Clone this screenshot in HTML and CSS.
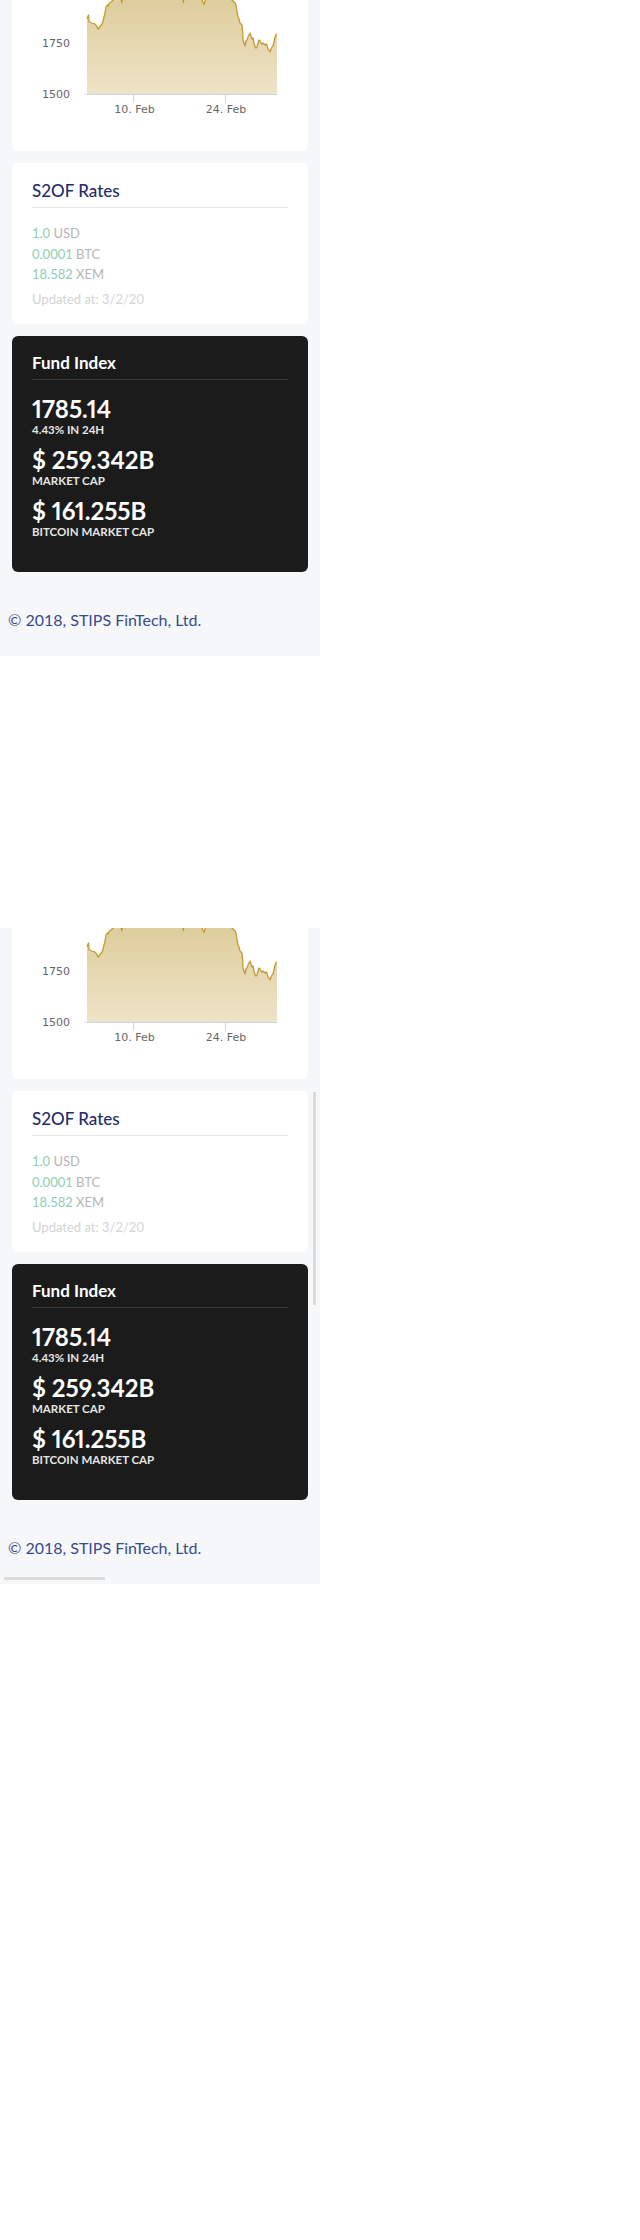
FILE: index.html
```html
<!DOCTYPE html>
<html lang="en">
<head>
<meta charset="utf-8">
<title>S2OF</title>
<link rel="stylesheet" href="styles.css">
</head>
<body>
<div class="page">
  <div class="viewport">
    <div class="panel">
      <div class="card chart-card">
        <svg class="chart" width="296" height="151" viewBox="12 0 296 151">
          <defs>
            <linearGradient id="fillA" x1="0" y1="0" x2="0" y2="1">
              <stop offset="0" stop-color="#dccb98"/>
              <stop offset="1" stop-color="#eee3c7"/>
            </linearGradient>
          </defs>
          <path class="area" fill="url(#fillA)" d="M87,19 L88.5,15 L89.2,22 L92,23 L95,24 L96.7,26 L98.3,29.5 L99.3,27 L101.7,25 L103.3,20 L105,13 L106,7 L107.3,5 L108.3,6 L109.3,3 L111,2 L113,0 L115,-2 L118,-5 L121,-2 L121.7,2.7 L122.5,-2 L130,-7 L150,-9 L170,-7 L180,-3 L182.8,-1 L183.3,2.5 L183.8,-1 L190,-5 L200,-3 L202,0 L203,2 L204,4.5 L205,1 L206,-2 L215,-6 L225,-3 L230,-1 L232,0 L234,2 L235,3 L236,5 L237,12 L238,17 L239,19 L240,23 L241,24 L242,25 L242.7,32 L243,40 L244,43 L245,46 L246,41 L247,40 L248,37 L249,35 L250,33 L251,36 L252,39 L253,38 L254,43 L255,47 L256,48 L257,47 L258,43 L259,40 L260,41 L261,43 L262,44 L263,43 L264,44 L265,45 L266,44 L267,45 L268,49 L269,50 L270,52 L271,49 L272,47 L273,46 L274,42 L275,37 L276,35 L277,34 L277,94 L87,94 Z"/>
          <path class="line" d="M87,19 L88.5,15 L89.2,22 L92,23 L95,24 L96.7,26 L98.3,29.5 L99.3,27 L101.7,25 L103.3,20 L105,13 L106,7 L107.3,5 L108.3,6 L109.3,3 L111,2 L113,0 L115,-2 L118,-5 L121,-2 L121.7,2.7 L122.5,-2 L130,-7 L150,-9 L170,-7 L180,-3 L182.8,-1 L183.3,2.5 L183.8,-1 L190,-5 L200,-3 L202,0 L203,2 L204,4.5 L205,1 L206,-2 L215,-6 L225,-3 L230,-1 L232,0 L234,2 L235,3 L236,5 L237,12 L238,17 L239,19 L240,23 L241,24 L242,25 L242.7,32 L243,40 L244,43 L245,46 L246,41 L247,40 L248,37 L249,35 L250,33 L251,36 L252,39 L253,38 L254,43 L255,47 L256,48 L257,47 L258,43 L259,40 L260,41 L261,43 L262,44 L263,43 L264,44 L265,45 L266,44 L267,45 L268,49 L269,50 L270,52 L271,49 L272,47 L273,46 L274,42 L275,37 L276,35 L277,34"/>
          <path class="axis" d="M85.5,94.5 L277.5,94.5 M133.5,94.5 L133.5,103 M225.5,94.5 L225.5,103"/>
          <text class="ylabel" x="70" y="47">1750</text>
          <text class="ylabel" x="70" y="97.5">1500</text>
          <text class="xlabel" x="134.5" y="113">10. Feb</text>
          <text class="xlabel" x="226" y="113">24. Feb</text>
        </svg>
      </div>
      <div class="card rates-card">
        <h2 class="card-title">S2OF Rates</h2>
        <div class="rates">
          <div class="rate"><span class="rate-value">1.0</span> <span class="rate-unit">USD</span></div>
          <div class="rate"><span class="rate-value">0.0001</span> <span class="rate-unit">BTC</span></div>
          <div class="rate"><span class="rate-value">18.582</span> <span class="rate-unit">XEM</span></div>
        </div>
        <div class="updated">Updated at: 3/2/20</div>
      </div>
      <div class="card fund-card">
        <h2 class="card-title fund-title">Fund Index</h2>
        <div class="stats">
          <div class="stat">
            <div class="stat-value">1785.14</div>
            <div class="stat-label">4.43% IN 24H</div>
          </div>
          <div class="stat">
            <div class="stat-value">$ 259.342B</div>
            <div class="stat-label">MARKET CAP</div>
          </div>
          <div class="stat">
            <div class="stat-value">$ 161.255B</div>
            <div class="stat-label">BITCOIN MARKET CAP</div>
          </div>
        </div>
      </div>
      <footer class="footer">© 2018, STIPS FinTech, Ltd.</footer>
    </div>
  </div>

  <div class="viewport scrolled">
    <div class="panel">
      <div class="card chart-card">
        <svg class="chart" width="296" height="151" viewBox="12 0 296 151">
          <defs>
            <linearGradient id="fillB" x1="0" y1="0" x2="0" y2="1">
              <stop offset="0" stop-color="#dccb98"/>
              <stop offset="1" stop-color="#eee3c7"/>
            </linearGradient>
          </defs>
          <path class="area" fill="url(#fillB)" d="M87,19 L88.5,15 L89.2,22 L92,23 L95,24 L96.7,26 L98.3,29.5 L99.3,27 L101.7,25 L103.3,20 L105,13 L106,7 L107.3,5 L108.3,6 L109.3,3 L111,2 L113,0 L115,-2 L118,-5 L121,-2 L121.7,2.7 L122.5,-2 L130,-7 L150,-9 L170,-7 L180,-3 L182.8,-1 L183.3,2.5 L183.8,-1 L190,-5 L200,-3 L202,0 L203,2 L204,4.5 L205,1 L206,-2 L215,-6 L225,-3 L230,-1 L232,0 L234,2 L235,3 L236,5 L237,12 L238,17 L239,19 L240,23 L241,24 L242,25 L242.7,32 L243,40 L244,43 L245,46 L246,41 L247,40 L248,37 L249,35 L250,33 L251,36 L252,39 L253,38 L254,43 L255,47 L256,48 L257,47 L258,43 L259,40 L260,41 L261,43 L262,44 L263,43 L264,44 L265,45 L266,44 L267,45 L268,49 L269,50 L270,52 L271,49 L272,47 L273,46 L274,42 L275,37 L276,35 L277,34 L277,94 L87,94 Z"/>
          <path class="line" d="M87,19 L88.5,15 L89.2,22 L92,23 L95,24 L96.7,26 L98.3,29.5 L99.3,27 L101.7,25 L103.3,20 L105,13 L106,7 L107.3,5 L108.3,6 L109.3,3 L111,2 L113,0 L115,-2 L118,-5 L121,-2 L121.7,2.7 L122.5,-2 L130,-7 L150,-9 L170,-7 L180,-3 L182.8,-1 L183.3,2.5 L183.8,-1 L190,-5 L200,-3 L202,0 L203,2 L204,4.5 L205,1 L206,-2 L215,-6 L225,-3 L230,-1 L232,0 L234,2 L235,3 L236,5 L237,12 L238,17 L239,19 L240,23 L241,24 L242,25 L242.7,32 L243,40 L244,43 L245,46 L246,41 L247,40 L248,37 L249,35 L250,33 L251,36 L252,39 L253,38 L254,43 L255,47 L256,48 L257,47 L258,43 L259,40 L260,41 L261,43 L262,44 L263,43 L264,44 L265,45 L266,44 L267,45 L268,49 L269,50 L270,52 L271,49 L272,47 L273,46 L274,42 L275,37 L276,35 L277,34"/>
          <path class="axis" d="M85.5,94.5 L277.5,94.5 M133.5,94.5 L133.5,103 M225.5,94.5 L225.5,103"/>
          <text class="ylabel" x="70" y="47">1750</text>
          <text class="ylabel" x="70" y="97.5">1500</text>
          <text class="xlabel" x="134.5" y="113">10. Feb</text>
          <text class="xlabel" x="226" y="113">24. Feb</text>
        </svg>
      </div>
      <div class="card rates-card">
        <h2 class="card-title">S2OF Rates</h2>
        <div class="rates">
          <div class="rate"><span class="rate-value">1.0</span> <span class="rate-unit">USD</span></div>
          <div class="rate"><span class="rate-value">0.0001</span> <span class="rate-unit">BTC</span></div>
          <div class="rate"><span class="rate-value">18.582</span> <span class="rate-unit">XEM</span></div>
        </div>
        <div class="updated">Updated at: 3/2/20</div>
      </div>
      <div class="card fund-card">
        <h2 class="card-title fund-title">Fund Index</h2>
        <div class="stats">
          <div class="stat">
            <div class="stat-value">1785.14</div>
            <div class="stat-label">4.43% IN 24H</div>
          </div>
          <div class="stat">
            <div class="stat-value">$ 259.342B</div>
            <div class="stat-label">MARKET CAP</div>
          </div>
          <div class="stat">
            <div class="stat-value">$ 161.255B</div>
            <div class="stat-label">BITCOIN MARKET CAP</div>
          </div>
        </div>
      </div>
      <footer class="footer">© 2018, STIPS FinTech, Ltd.</footer>
    </div>
    <div class="scroll-thumb-v"></div>
    <div class="scroll-thumb-h"></div>
  </div>
</div>
</body>
</html>
```

FILE: styles.css
```css
* { box-sizing: border-box; }

html, body {
  margin: 0;
  padding: 0;
  background: #ffffff;
}

body {
  font-family: Lato, "Noto Sans", "Liberation Sans", sans-serif;
  color: #1f2d6b;
}

.page {
  display: flex;
  flex-direction: column;
  gap: 272px;
}

.viewport {
  position: relative;
  width: 320px;
  height: 656px;
  overflow: hidden;
  background: #f6f7f9;
}

.panel {
  display: flex;
  flex-direction: column;
  gap: 12px;
  padding: 0 12px;
}

.card {
  background: #ffffff;
  border-radius: 6px;
}

.chart-card {
  height: 151px;
  border-radius: 0 0 6px 6px;
  overflow: hidden;
}

.chart {
  display: block;
}

.chart .line {
  fill: none;
  stroke: #c39a2f;
  stroke-width: 1.3;
  stroke-linejoin: round;
}

.chart .axis {
  fill: none;
  stroke: #ccd6eb;
  stroke-width: 1;
}

.chart .ylabel,
.chart .xlabel {
  font-family: "DejaVu Sans", sans-serif;
  font-size: 11px;
  fill: #666666;
}

.chart .ylabel { text-anchor: end; }
.chart .xlabel { text-anchor: middle; }

.rates-card {
  height: 161px;
  padding: 16px 20px 0;
}

.card-title {
  margin: 0;
  font-size: 17px;
  line-height: 24px;
  font-weight: 500;
  color: #1f2d6b;
  padding-bottom: 4px;
  border-bottom: 1px solid #e8e8ea;
}

.rates {
  display: flex;
  flex-direction: column;
  padding-top: 15px;
}

.rate {
  font-size: 13px;
  line-height: 20.5px;
}

.rate-value { color: #8dceb6; }
.rate-unit { color: #b5b5b5; }

.updated {
  margin-top: 4px;
  font-size: 13px;
  line-height: 20px;
  color: #d4d4d4;
}

.fund-card {
  height: 236px;
  background: #1b1b1b;
  padding: 15px 20px 0;
}

.fund-title {
  color: #ffffff;
  font-weight: 700;
  border-bottom-color: #3a3a3a;
}

.stats {
  display: flex;
  flex-direction: column;
  gap: 9px;
  padding-top: 15px;
}

.stat-value {
  font-size: 24px;
  line-height: 28px;
  font-weight: 700;
  color: #ffffff;
  font-variant-numeric: proportional-nums;
  font-feature-settings: "pnum" 1;
}

.stat-label {
  font-size: 11.5px;
  line-height: 14px;
  font-weight: 700;
  color: #e4e4e4;
}

.footer {
  padding: 24px 0 0 8px;
  margin: 0 -12px;
  font-size: 16px;
  line-height: 24px;
  color: #3a4b8a;
}

.scroll-thumb-v {
  position: absolute;
  left: 313px;
  top: 164px;
  width: 3px;
  height: 213px;
  background: #dcdcdc;
}

.scroll-thumb-h {
  position: absolute;
  left: 4px;
  top: 649px;
  width: 101px;
  height: 3px;
  background: #dcdcdc;
}
```
